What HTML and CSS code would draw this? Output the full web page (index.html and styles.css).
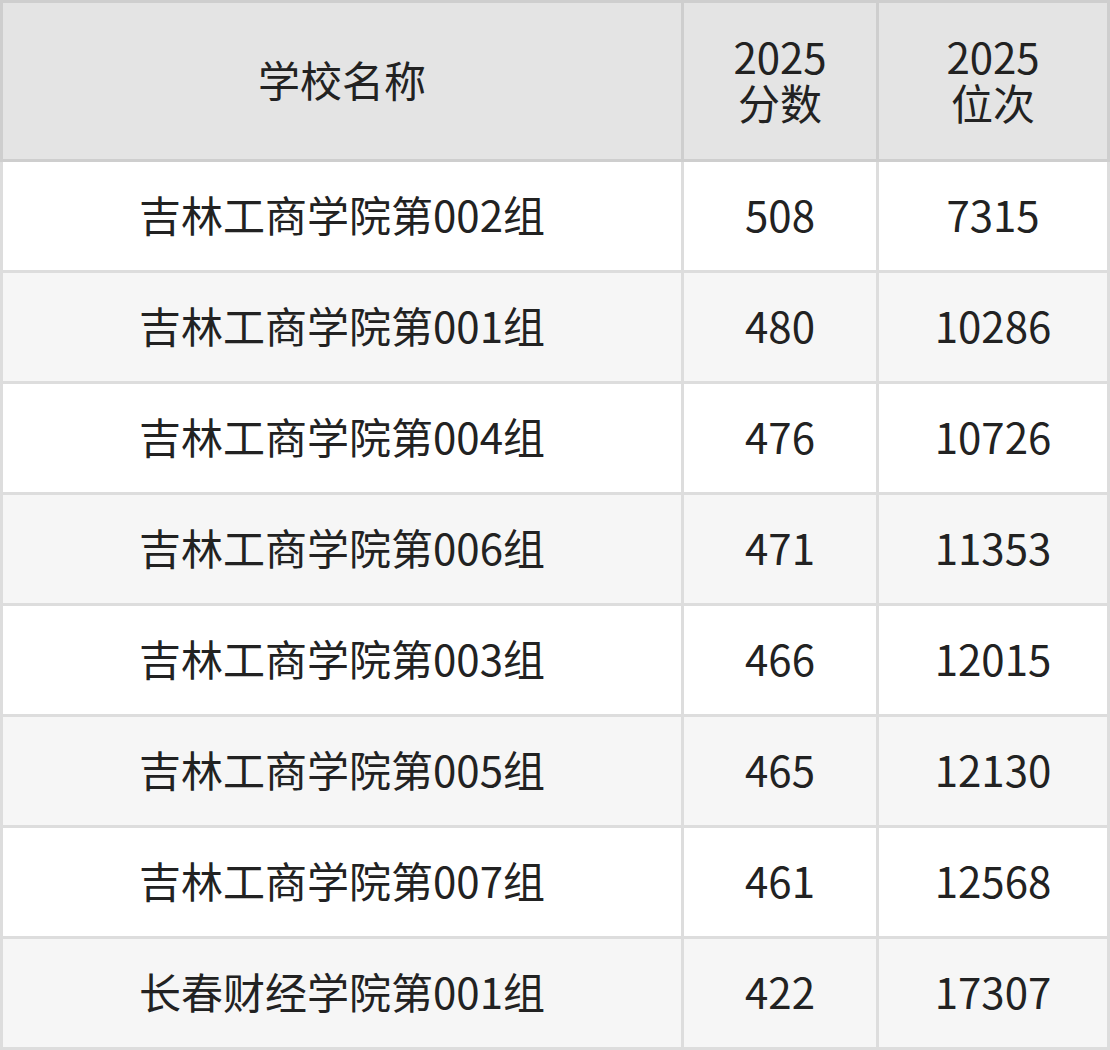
FILE: index.html
```html
<!DOCTYPE html>
<html lang="zh-CN">
<head>
<meta charset="utf-8">
<link rel="stylesheet" href="styles.css">
</head>
<body>
<table class="score-table">
  <colgroup>
    <col class="col-name">
    <col class="col-score">
    <col class="col-rank">
  </colgroup>
  <thead>
    <tr>
      <th>学校名称</th>
      <th><span class="line">2025</span><span class="line">分数</span></th>
      <th><span class="line">2025</span><span class="line">位次</span></th>
    </tr>
  </thead>
  <tbody>
    <tr><td>吉林工商学院第002组</td><td>508</td><td>7315</td></tr>
    <tr><td>吉林工商学院第001组</td><td>480</td><td>10286</td></tr>
    <tr><td>吉林工商学院第004组</td><td>476</td><td>10726</td></tr>
    <tr><td>吉林工商学院第006组</td><td>471</td><td>11353</td></tr>
    <tr><td>吉林工商学院第003组</td><td>466</td><td>12015</td></tr>
    <tr><td>吉林工商学院第005组</td><td>465</td><td>12130</td></tr>
    <tr><td>吉林工商学院第007组</td><td>461</td><td>12568</td></tr>
    <tr><td>长春财经学院第001组</td><td>422</td><td>17307</td></tr>
  </tbody>
</table>
</body>
</html>
```
FILE: styles.css
```css
html, body {
  margin: 0;
  padding: 0;
  background: #ffffff;
}

.score-table {
  width: 1110px;
  border-collapse: collapse;
  table-layout: fixed;
  font-family: "Noto Sans CJK SC", "Noto Sans", sans-serif;
  font-size: 42px;
  color: #222222;
}

.col-name { width: 681px; }
.col-score { width: 195px; }
.col-rank { width: 231px; }

.score-table th,
.score-table td {
  padding: 0 0 4px 0;
  text-align: center;
  vertical-align: middle;
}

.score-table th {
  height: 152px;
  background: #e4e4e4;
  border: 3px solid #cecece;
  font-weight: normal;
  line-height: 46px;
}

.score-table th .line {
  display: block;
}

.score-table td {
  height: 104px;
  border: 3px solid #dddddd;
  line-height: 48px;
}

.score-table tbody tr:nth-child(odd) td {
  background: #ffffff;
}

.score-table tbody tr:nth-child(even) td {
  background: #f6f6f6;
}
```
